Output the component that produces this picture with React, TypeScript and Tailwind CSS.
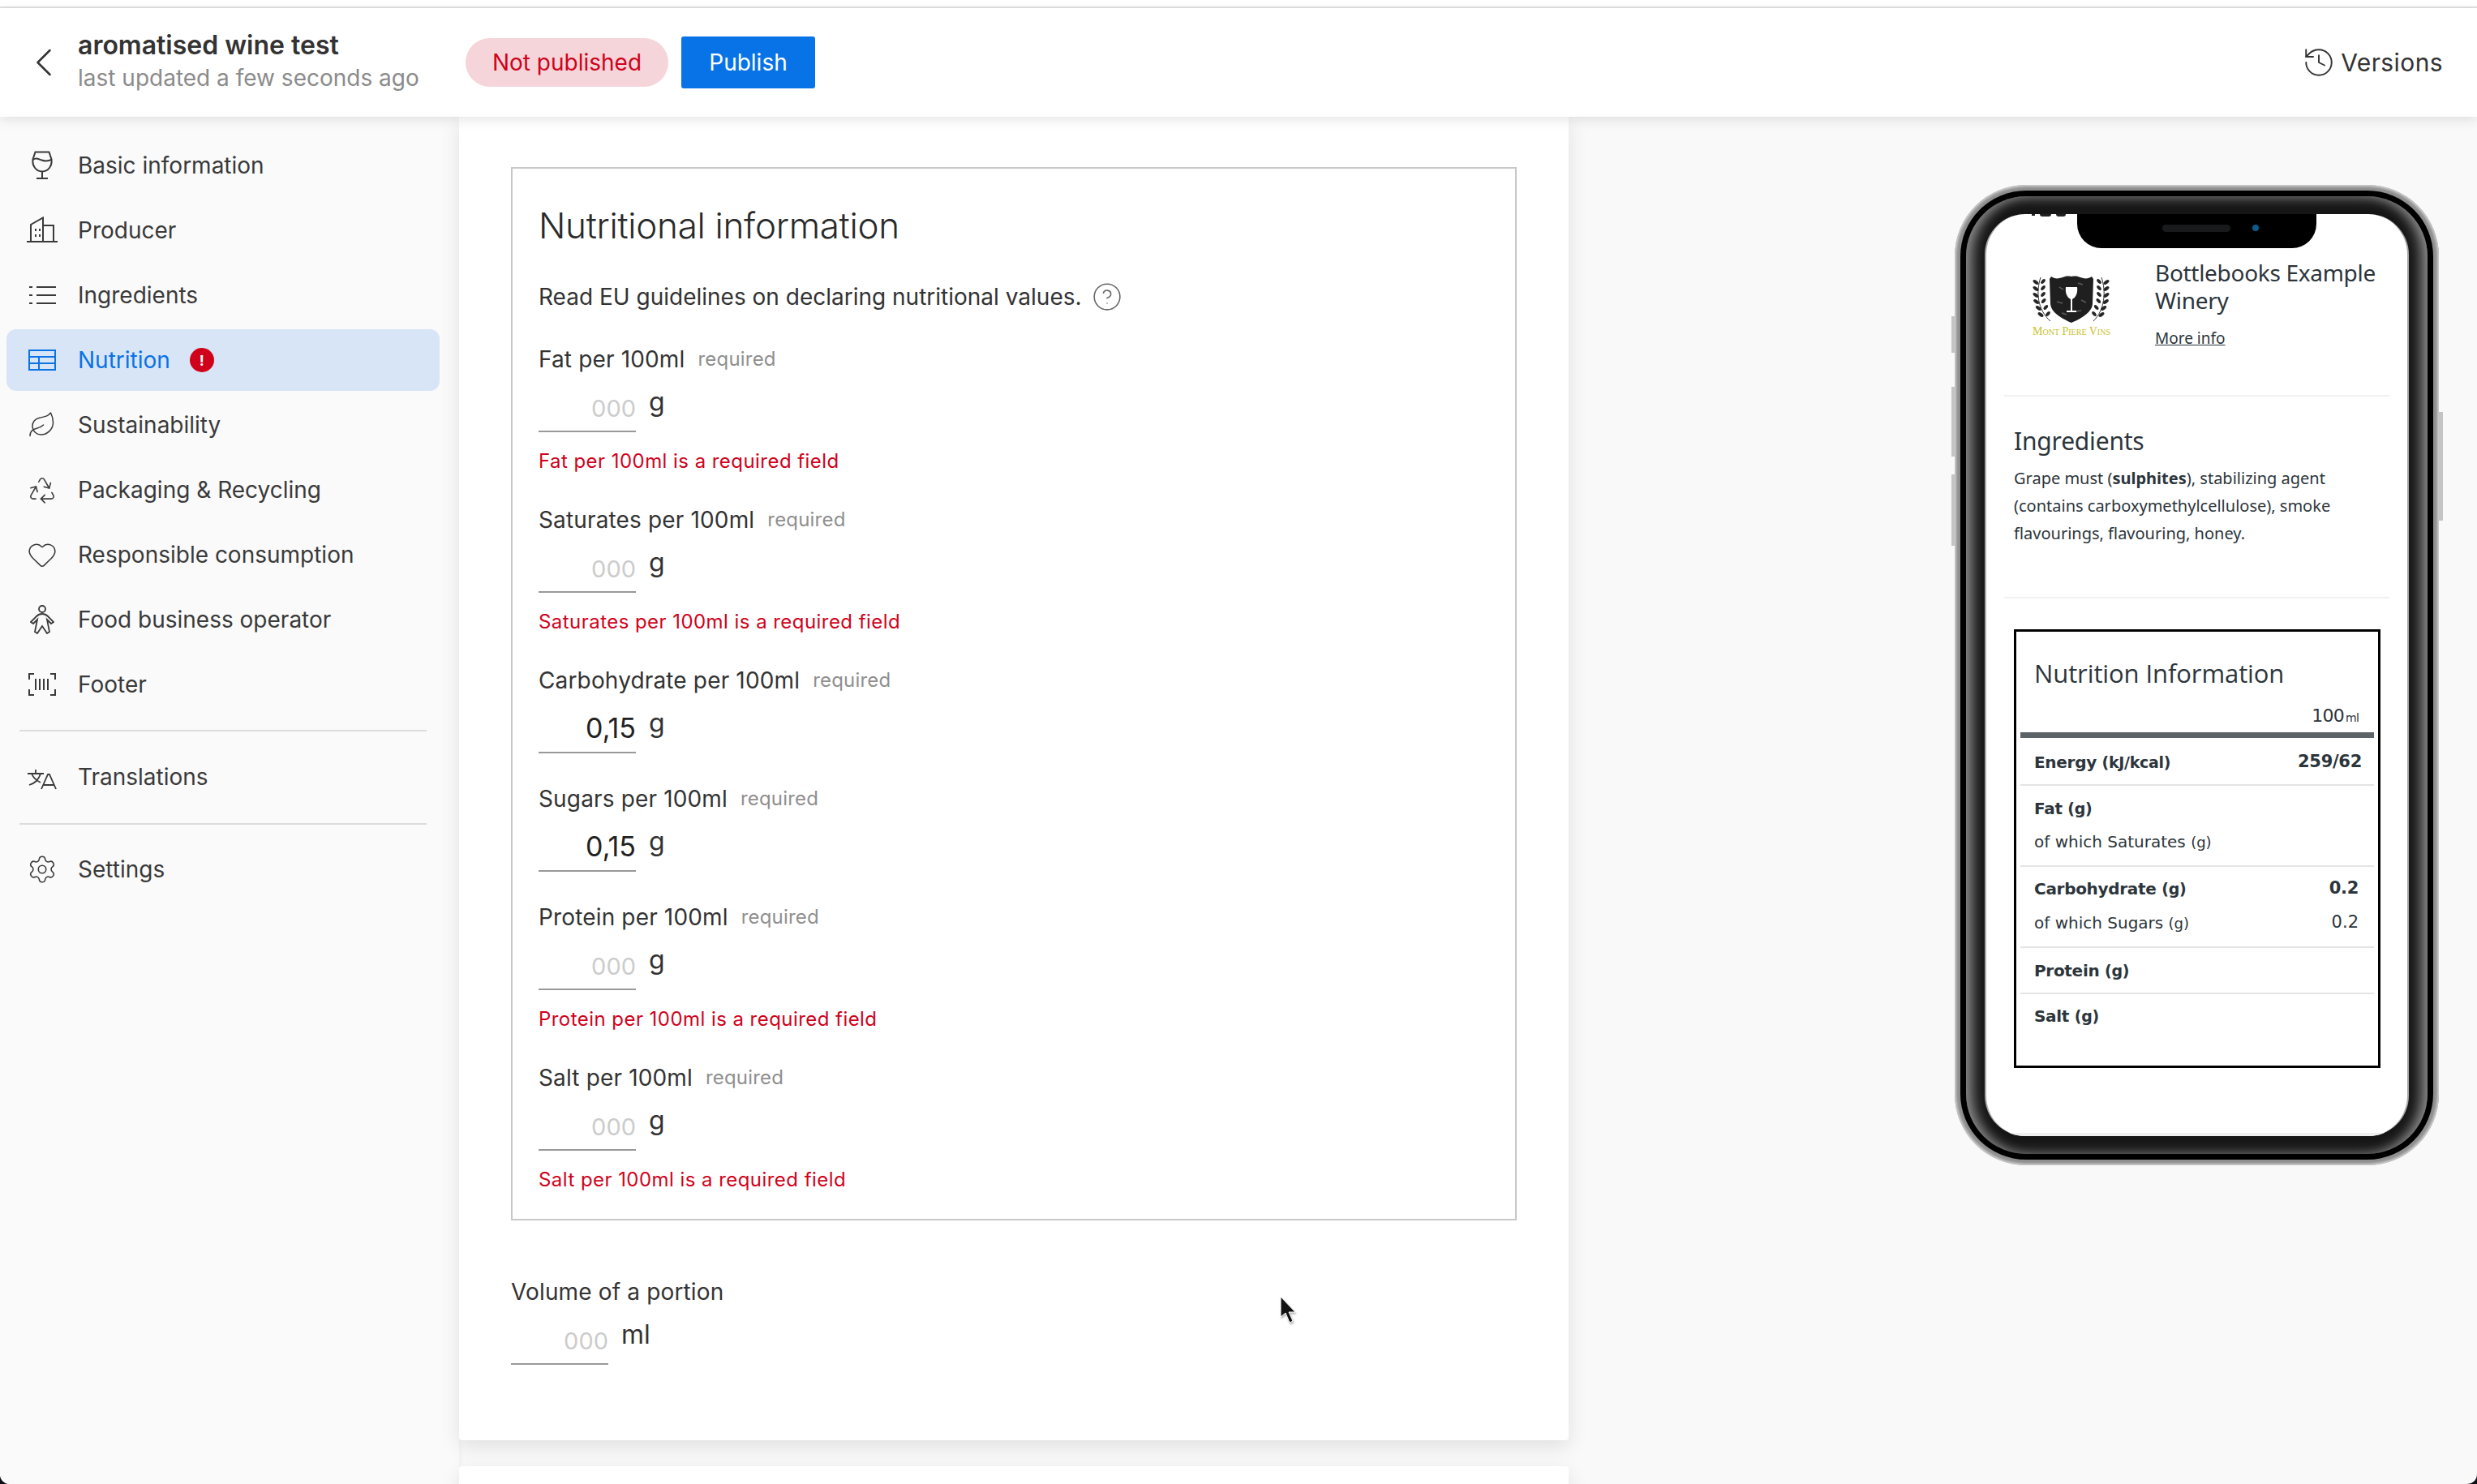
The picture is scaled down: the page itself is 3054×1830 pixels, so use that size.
import { ReactNode } from 'react';
import { ChevronLeft, CircleHelp, History, Leaf, Heart, Recycle, Settings } from 'lucide-react';

const WineIcon = () => (
  <svg width="36" height="36" viewBox="0 0 36 36" fill="none" stroke="currentColor" strokeWidth="2">
    <path d="M9.500 1.500h17l3 9c1 8-4 15-11.500 15S5.500 18.500 6.500 10.500z" />
    <path d="M6.500 11c4-3 7-1 11 .5s8 1 12-.5" />
    <path d="M18 26v8M11 34h14" />
  </svg>
);

const BuildingIcon = () => (
  <svg width="38" height="34" viewBox="0 0 38 34" fill="none" stroke="currentColor" strokeWidth="2">
    <path d="M0 31h38" />
    <path d="M5 31V10L20 1.500V31" />
    <path d="M20 11h13v20" />
    <path d="M11 15v3M16 15v3M11 22v3M16 22v3" />
  </svg>
);

const ListIcon = () => (
  <svg width="34" height="24" viewBox="0 0 34 24" fill="none" stroke="currentColor" strokeWidth="2">
    <path d="M10 2h24M10 12h24M10 22h24M1 2h4M1 12h4M1 22h4" />
  </svg>
);

const TableIcon = () => (
  <svg width="34" height="26" viewBox="0 0 34 26" fill="none" stroke="currentColor" strokeWidth="2">
    <rect x="1" y="1" width="32" height="24" />
    <path d="M1 9h32M1 17h32M13 9v16" />
  </svg>
);

const PersonIcon = () => (
  <svg width="30" height="36" viewBox="0 0 30 36" fill="none" stroke="currentColor" strokeWidth="1.800">
    <circle cx="15" cy="5" r="4" />
    <path d="M1 21l7-7c2-2 4-3 7-3s5 1 7 3l7 7-3 2-5-5 3 15-3 2-6-9-6 9-3-2 3-15-5 5z" />
  </svg>
);

const BarcodeIcon = () => (
  <svg width="34" height="28" viewBox="0 0 34 28" fill="none" stroke="currentColor" strokeWidth="2">
    <path d="M7 1H1v7M27 1h6v7M7 27H1v-7M27 27h6v-7" />
    <path d="M9 7v14M14 7v14M19 7v14M24 7v14" />
  </svg>
);

const TranslateIcon = () => (
  <svg width="36" height="32" viewBox="0 0 36 32" fill="none" stroke="currentColor" strokeWidth="1.800">
    <path d="M0 12h20M10 7v5M16 12c-2 7-7 12-14 14M5 12c2 5 7 9 11 11" />
    <path d="M17 31l8-18h2l8 18M20 26h13" />
  </svg>
);

const NavRow = ({ icon, active, children }: { icon: ReactNode; active?: boolean; children: ReactNode }) => (
  <li
    className={`mb-1 ml-2 flex h-[76px] w-[534px] items-center rounded-xl ${
      active ? 'bg-[#d8e5f6] text-[#0a73e6]' : 'text-[#3a3a3a]'
    }`}
  >
    <span className="flex w-[88px] shrink-0 items-center justify-center">{icon}</span>
    {children}
  </li>
);

const Field = ({
  label,
  value,
  unit = 'g',
  required = true,
  error,
  className = 'mb-9',
}: {
  label: string;
  value?: string;
  unit?: string;
  required?: boolean;
  error?: string;
  className?: string;
}) => (
  <div className={className}>
    <div className="flex h-10 items-center text-[28px] tracking-[0.15px] text-[#333]">
      {label}
      {required && <span className="ml-4 text-[24px] tracking-[0.2px] text-[#8f8f8f]">required</span>}
    </div>
    <div className="flex h-[70px] items-start">
      <input
        readOnly
        placeholder="000"
        defaultValue={value}
        className="h-[70px] w-[120px] border-b-2 border-[#999] bg-transparent pt-[9px] text-right text-[34px] text-[#222] outline-none placeholder:text-[29px] placeholder:text-[#ccc]"
      />
      <span className="ml-4 pt-[11px] text-[32px] leading-[44px] text-[#333]">{unit}</span>
    </div>
    {error && <div className="mt-[19px] flex h-[33px] items-center text-[24px] tracking-[0.45px] text-[#d0021b]">{error}</div>}
  </div>
);

const NutritionRow = ({
  name,
  unit,
  value,
  bold = true,
  border = true,
  pad,
  valueClass = '',
}: {
  name: string;
  unit: string;
  value?: string;
  bold?: boolean;
  border?: boolean;
  pad: string;
  valueClass?: string;
}) => (
  <div
    className={`mx-[5px] flex ${pad} items-center justify-between pl-[17px] pr-[19px] ${
      border ? 'border-b-2 border-[#e4e4e4]' : ''
    } ${bold ? 'font-bold tracking-[-0.3px]' : ''}`}
  >
    <span className="text-[20px]">
      {name} <span className={`${bold ? 'text-[19px]' : 'text-[18px]'}`}>{unit}</span>
    </span>
    {value && <span className={`text-[21px] ${valueClass}`}>{value}</span>}
  </div>
);

const laurel = [4, 12, 20, 28, 36, 44];

const Logo = () => (
  <div className="flex w-[96px] flex-col items-center">
    <svg width="96" height="58" viewBox="0 0 96 58">
      <path d="M23 1c4 3 9 3 14 1 3-1 5-2 11-1 6-1 8 0 11 1 5 2 10 2 14-1l2 3-1 30c0 10-12 18-26 24-14-6-26-14-26-24L21 4z" fill="#1f1f1f" />
      <path d="M33 14l5 3M56 9l6 2M30 32l7 2M60 30l6 3M36 46l6 2M54 44l6-1" stroke="#5a5a5a" strokeWidth="1.500" />
      <path d="M41 14h14c1 8-2 13-6 15v14h5v2H42v-2h5V29c-4-2-7-7-6-15z" fill="#fff" />
      <path d="M10 2C4 20 6 42 22 56M85 2c6 18 4 40-10 54" fill="none" stroke="#333" strokeWidth="1" />
      {laurel.map((y) => {
        const shift = y > 26 ? (y - 26) / 3 : 0;
        return (
          <g key={y} fill="#262626">
            <ellipse cx={4 + shift} cy={y + 4} rx="4" ry="2" transform={`rotate(35 ${4 + shift} ${y + 4})`} />
            <ellipse cx={13 + shift} cy={y + 3} rx="3.500" ry="2" transform={`rotate(-50 ${13 + shift} ${y + 3})`} />
            <ellipse cx={91 - shift} cy={y + 4} rx="4" ry="2" transform={`rotate(-35 ${91 - shift} ${y + 4})`} />
            <ellipse cx={82 - shift} cy={y + 3} rx="3.500" ry="2" transform={`rotate(50 ${82 - shift} ${y + 3})`} />
          </g>
        );
      })}
    </svg>
    <span className="mt-[4px] whitespace-nowrap text-[14px] leading-[14px] text-[#c9c22a] [font-family:'Liberation_Serif',serif] [font-variant:small-caps]">
      Mont Piere Vins
    </span>
  </div>
);

const Phone = () => (
  <div className="relative mr-[47px] mt-[84px] h-[1209px] w-[597px] shrink-0 rounded-[88px] bg-[#8f8f8f] p-[7px] shadow-[inset_0_0_3px_2px_#d0d0d0]">
    <div className="absolute -left-[4px] top-[162px] h-[45px] w-[4px] bg-[#c4c4c4]" />
    <div className="absolute -left-[4px] top-[249px] h-[86px] w-[4px] bg-[#c4c4c4]" />
    <div className="absolute -left-[4px] top-[357px] h-[88px] w-[4px] bg-[#c4c4c4]" />
    <div className="absolute -right-[5px] top-[280px] h-[134px] w-[5px] bg-[#c4c4c4]" />
    <div className="h-full rounded-[81px] bg-black p-[7px]">
      <div className="h-full rounded-[74px] bg-[#161616] px-[23px] pb-[22px] pt-[22px] shadow-[inset_16px_0_16px_-8px_#8c8c8c,inset_-16px_0_16px_-8px_#8c8c8c,inset_0_12px_14px_-8px_#555,inset_0_-12px_14px_-8px_#444]">
        <div className="relative h-full overflow-hidden rounded-[50px] border-x-2 border-[#a8a8a8] bg-white [font-family:'Noto_Sans',sans-serif]">
          <div className="absolute left-[56px] top-0 flex gap-[6px]">
            <span className="h-[2px] w-[4px] bg-[#222]" />
            <span className="h-[3px] w-[14px] rounded-b-full bg-[#222]" />
            <span className="h-[3px] w-[12px] rounded-b-full bg-[#222]" />
          </div>
          <div className="absolute left-[112px] top-0 h-[42px] w-[295px] rounded-b-[30px] bg-black">
            <div className="absolute left-[105px] top-[13px] h-[9px] w-[84px] rounded-full bg-[#181a1b]" />
            <div className="absolute left-[216px] top-[13px] h-[8px] w-[8px] rounded-full bg-[#0b5c8d]" />
          </div>
          <div className="absolute inset-x-0 bottom-0 h-[4px] bg-[#efefef]" />
          <div className="flex flex-col px-[22px] pt-[54px] text-[#2c353b]">
            <div className="flex h-[171px] border-b-2 border-[#f0f1f2]">
              <div className="pl-[35px] pt-[22px]">
                <Logo />
              </div>
              <div className="ml-[55px]">
                <p className="pt-[1px] text-[28px] leading-[34px] tracking-[-0.3px]">Bottlebooks Example Winery</p>
                <a className="mt-[18px] block text-[19px] leading-[24px] underline">More info</a>
              </div>
            </div>
            <div className="h-[249px] border-b-2 border-[#f0f1f2] px-[12px] pt-[36px]">
              <h3 className="text-[30px] leading-[38px] tracking-[-0.2px]">Ingredients</h3>
              <p className="mt-[10px] w-[440px] text-[20px] leading-[34px]">
                Grape must (<b>sulphites</b>), stabilizing agent (contains carboxymethylcellulose), smoke flavourings,
                flavouring, honey.
              </p>
            </div>
            <div className="mx-[12px] mt-[38px] h-[541px] w-[452px] border-[3px] border-black text-[#2c353b] [font-family:'DejaVu_Sans',sans-serif]">
              <h3 className="ml-[22px] mt-[31px] text-[31px] leading-[40px] tracking-[-0.1px] [font-family:'Open_Sans',sans-serif]">
                Nutrition Information
              </h3>
              <div className="mr-[24px] mt-[19px] h-[28px] text-right text-[22px] leading-[28px] tracking-[-0.8px]">
                100 <span className="-ml-[4px] text-[14px]">ml</span>
              </div>
              <div className="mx-[5px] mt-[6px] h-[7px] bg-[#5c6467]" />
              <NutritionRow name="Energy" unit="(kJ/kcal)" value="259/62" pad="h-[59px] pt-[3px]" valueClass="-mr-[4px]" />
              <NutritionRow name="Fat" unit="(g)" border={false} pad="h-[56px]" />
              <NutritionRow name="of which Saturates" unit="(g)" bold={false} pad="h-[44px] pb-[16px]" />
              <NutritionRow name="Carbohydrate" unit="(g)" value="0.2" border={false} pad="h-[54px]" />
              <NutritionRow name="of which Sugars" unit="(g)" value="0.2" bold={false} pad="h-[46px] pb-[14px]" />
              <NutritionRow name="Protein" unit="(g)" pad="h-[57px]" />
              <NutritionRow name="Salt" unit="(g)" border={false} pad="h-[54px]" />
            </div>
          </div>
        </div>
      </div>
    </div>
  </div>
);

const App = () => {
  return (
    <div className="h-[1830px] bg-[#0d0d14]">
      <div className="flex h-full flex-col overflow-hidden rounded-b-[12px] bg-[#f9f9f9] text-[#333] [font-family:Inter,sans-serif]">
        <div className="h-[10px] shrink-0 border-b-2 border-[#e0e0e0] bg-white" />
        <header className="relative z-10 flex h-[134px] shrink-0 items-center bg-white pl-[36px] pr-[42px] shadow-[0_4px_14px_rgba(0,0,0,0.1)]">
          <ChevronLeft size={60} strokeWidth={1} className="-ml-[12px] shrink-0 text-[#333]" />
          <div className="-mt-[4px] ml-[12px] w-[478px] shrink-0">
            <h1 className="text-[32px] font-semibold leading-[42px] text-[#333]">aromatised wine test</h1>
            <p className="text-[28px] leading-[38px] text-[#8b8b8b]">last updated a few seconds ago</p>
          </div>
          <span className="flex h-[60px] w-[250px] items-center justify-center rounded-full bg-[#f5d5d9] text-[28px] text-[#d0021b]">
            Not published
          </span>
          <button className="ml-4 h-[64px] w-[165px] rounded-[3px] bg-[#0773e6] text-[28px] text-white">Publish</button>
          <div className="ml-auto flex items-center gap-[6px] text-[30px] tracking-[0.4px] text-[#333]">
            <History size={42} strokeWidth={1.100} />
            Versions
          </div>
        </header>
        <div className="flex min-h-0 flex-1">
          <aside className="flex w-[566px] shrink-0 flex-col bg-[#fafafa] pt-[22px] text-[28px] shadow-[2px_0_6px_rgba(0,0,0,0.04)]">
            <ul>
              <NavRow icon={<WineIcon />}>Basic information</NavRow>
              <NavRow icon={<BuildingIcon />}>Producer</NavRow>
              <NavRow icon={<ListIcon />}>Ingredients</NavRow>
              <NavRow icon={<TableIcon />} active>
                Nutrition
                <span className="ml-6 flex h-[30px] w-[30px] items-center justify-center rounded-full bg-[#d0021b] text-[18px] font-bold text-white">
                  !
                </span>
              </NavRow>
              <NavRow icon={<Leaf size={36} strokeWidth={1} />}>Sustainability</NavRow>
              <NavRow icon={<Recycle size={38} strokeWidth={1} />}>Packaging &amp; Recycling</NavRow>
              <NavRow icon={<Heart size={38} strokeWidth={1} />}>Responsible consumption</NavRow>
              <NavRow icon={<PersonIcon />}>Food business operator</NavRow>
              <NavRow icon={<BarcodeIcon />}>Footer</NavRow>
            </ul>
            <hr className="mx-6 mb-[18px] mt-[14px] w-[502px] border-t-2 border-[#dcdcdc]" />
            <ul>
              <NavRow icon={<TranslateIcon />}>Translations</NavRow>
            </ul>
            <hr className="mx-6 mb-[17px] mt-[15px] w-[502px] border-t-2 border-[#dcdcdc]" />
            <ul>
              <NavRow icon={<Settings size={38} strokeWidth={1} />}>Settings</NavRow>
            </ul>
          </aside>
          <main className="flex min-w-0 flex-1 justify-between">
            <div className="w-[1368px] shrink-0">
              <section className="rounded-b-[4px] bg-white px-[64px] pb-[93px] pt-[62px] shadow-[0_8px_24px_rgba(0,0,0,0.1)]">
                <div className="border-2 border-[#c8c8c8] px-[32px] pt-[40px]">
                  <h2 className="h-[60px] text-[44px] font-light leading-[60px] tracking-[-0.3px] text-[#2a2a2a]">
                    Nutritional information
                  </h2>
                  <div className="mb-[37px] mt-[38px] flex h-10 items-center text-[28px] text-[#333]">
                    Read EU guidelines on declaring nutritional values.
                    <CircleHelp size={38} strokeWidth={1} className="ml-3 text-[#666]" />
                  </div>
                  <Field label="Fat per 100ml" error="Fat per 100ml is a required field" />
                  <Field label="Saturates per 100ml" error="Saturates per 100ml is a required field" />
                  <Field label="Carbohydrate per 100ml" value="0,15" />
                  <Field label="Sugars per 100ml" value="0,15" />
                  <Field label="Protein per 100ml" error="Protein per 100ml is a required field" />
                  <Field label="Salt per 100ml" error="Salt per 100ml is a required field" className="mb-8" />
                </div>
                <div className="relative mt-[68px]">
                  <Field label="Volume of a portion" unit="ml" required={false} className="" />
                  <svg
                    width="22"
                    height="36"
                    viewBox="0 0 22 36"
                    className="absolute left-[948px] top-[25px] drop-shadow-[1px_2px_1px_rgba(0,0,0,0.3)]"
                  >
                    <path d="M1 1v25l6-5 5 12 4-2-5-11h8z" fill="#111" stroke="#fff" strokeWidth="1" />
                  </svg>
                </div>
              </section>
              <section className="mt-8 h-[200px] rounded-t-[4px] bg-white shadow-[0_8px_24px_rgba(0,0,0,0.1)]" />
            </div>
            <Phone />
          </main>
        </div>
      </div>
    </div>
  );
};

export default App;
